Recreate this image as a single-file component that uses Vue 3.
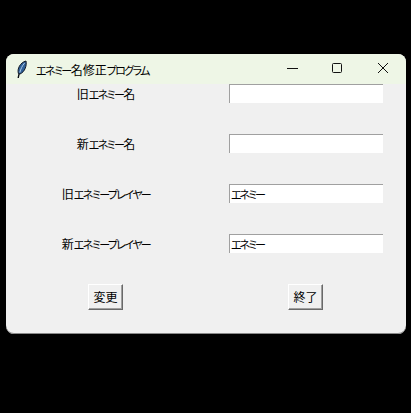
<script setup>
const splitRuns = (text) =>
  text.match(/[\u30a0-\u30ff]+|[^\u30a0-\u30ff]+/g).map((t) => ({
    text: t,
    kana: /[\u30a0-\u30ff]/.test(t),
  }))

const title = splitRuns('エネミー名修正プログラム')
const rows = [
  { label: '旧エネミー名', value: '' },
  { label: '新エネミー名', value: '' },
  { label: '旧エネミープレイヤー', value: 'エネミー' },
  { label: '新エネミープレイヤー', value: 'エネミー' },
].map((r) => ({ ...r, runs: splitRuns(r.label) }))
</script>

<template>
  <div class="screen">
    <div class="window">
      <header class="titlebar">
        <svg class="feather" width="12" height="20" viewBox="0 0 12 20">
          <path d="M2.2 18 C2.6 15.5 3 14 3.6 12.5" stroke="#0c1016" stroke-width="1.4" fill="none" />
          <path d="M2.4 13.5 C1 9 4 2.5 10 1 C11 5.5 8.8 12 4 14 Z" fill="#2f5f98" stroke="#121a26" stroke-width="1" />
          <path d="M3.8 12.5 C4.8 9 6 6 8.6 3" stroke="#a9c8e6" stroke-width="1" fill="none" />
        </svg>
        <span class="title">
          <span v-for="(r, i) in title" :key="i" :class="{ kana: r.kana }">{{ r.text }}</span>
        </span>
        <div class="controls">
          <span class="ctl">
            <svg width="14" height="12" viewBox="0 0 14 12"><path d="M3 5.5H14" stroke="#111" fill="none" /></svg>
          </span>
          <span class="ctl">
            <svg width="12" height="12" viewBox="0 0 12 12"><rect x="1.5" y="0.5" width="9" height="9" rx="1" stroke="#111" fill="none" /></svg>
          </span>
          <span class="ctl">
            <svg width="12" height="12" viewBox="0 0 12 12"><path d="M1 0L11 10M11 0L1 10" stroke="#111" fill="none" /></svg>
          </span>
        </div>
      </header>
      <main class="form">
        <template v-for="row in rows" :key="row.label">
          <label class="label">
            <span v-for="(r, i) in row.runs" :key="i" :class="{ kana: r.kana }">{{ r.text }}</span>
          </label>
          <input class="entry" type="text" :value="row.value" />
        </template>
        <button class="btn" type="button">変更</button>
        <button class="btn" type="button">終了</button>
      </main>
    </div>
  </div>
</template>

<style scoped>
.screen {
  width: 411px;
  height: 413px;
  background: #000;
  padding: 54px 0 0 6px;
  box-sizing: border-box;
  overflow: hidden;
}
.window {
  width: 400px;
  height: 280px;
  background: #f0f0f0;
  border-radius: 8px;
  overflow: hidden;
  font-family: "Noto Sans CJK JP", "Liberation Sans", sans-serif;
  font-size: 12px;
  color: #000;
  box-shadow: inset 0 -1px 0 #8a8a8a;
}
.titlebar {
  height: 30px;
  background: #eef6e6;
  display: flex;
  align-items: center;
  padding-left: 10px;
}
.feather {
  flex: none;
  margin-top: 1px;
}
.title {
  margin-left: 8px;
  white-space: nowrap;
}
.kana {
  font-size: 11px;
  letter-spacing: -1.6px;
  font-feature-settings: "palt";
}
.controls {
  margin-left: auto;
  display: flex;
}
.ctl {
  width: 46px;
  height: 30px;
  display: flex;
  align-items: center;
  justify-content: center;
}
.form {
  display: grid;
  grid-template-columns: 200px 200px;
  row-gap: 31px;
  justify-items: center;
  align-items: center;
}
.label {
  height: 19px;
  line-height: 19px;
  white-space: nowrap;
}
.entry {
  width: 154px;
  height: 19px;
  box-sizing: border-box;
  border: none;
  border-top: 1px solid #a0a0a0;
  border-left: 1px solid #a0a0a0;
  background: #fff;
  padding: 0 0 0 1px;
  margin: 0;
  font: inherit;
  font-size: 11px;
  letter-spacing: -2px;
  font-feature-settings: "palt";
  color: #000;
  outline: none;
}
.btn {
  width: 35px;
  height: 26px;
  box-sizing: border-box;
  padding: 0 0 2px;
  margin: 0 1px 0 0;
  font: inherit;
  font-size: 12px;
  color: #000;
  background: #f0f0f0;
  border: 1px solid;
  border-color: #fff #696969 #696969 #fff;
  box-shadow: inset -1px -1px 0 #a0a0a0;
}
</style>
